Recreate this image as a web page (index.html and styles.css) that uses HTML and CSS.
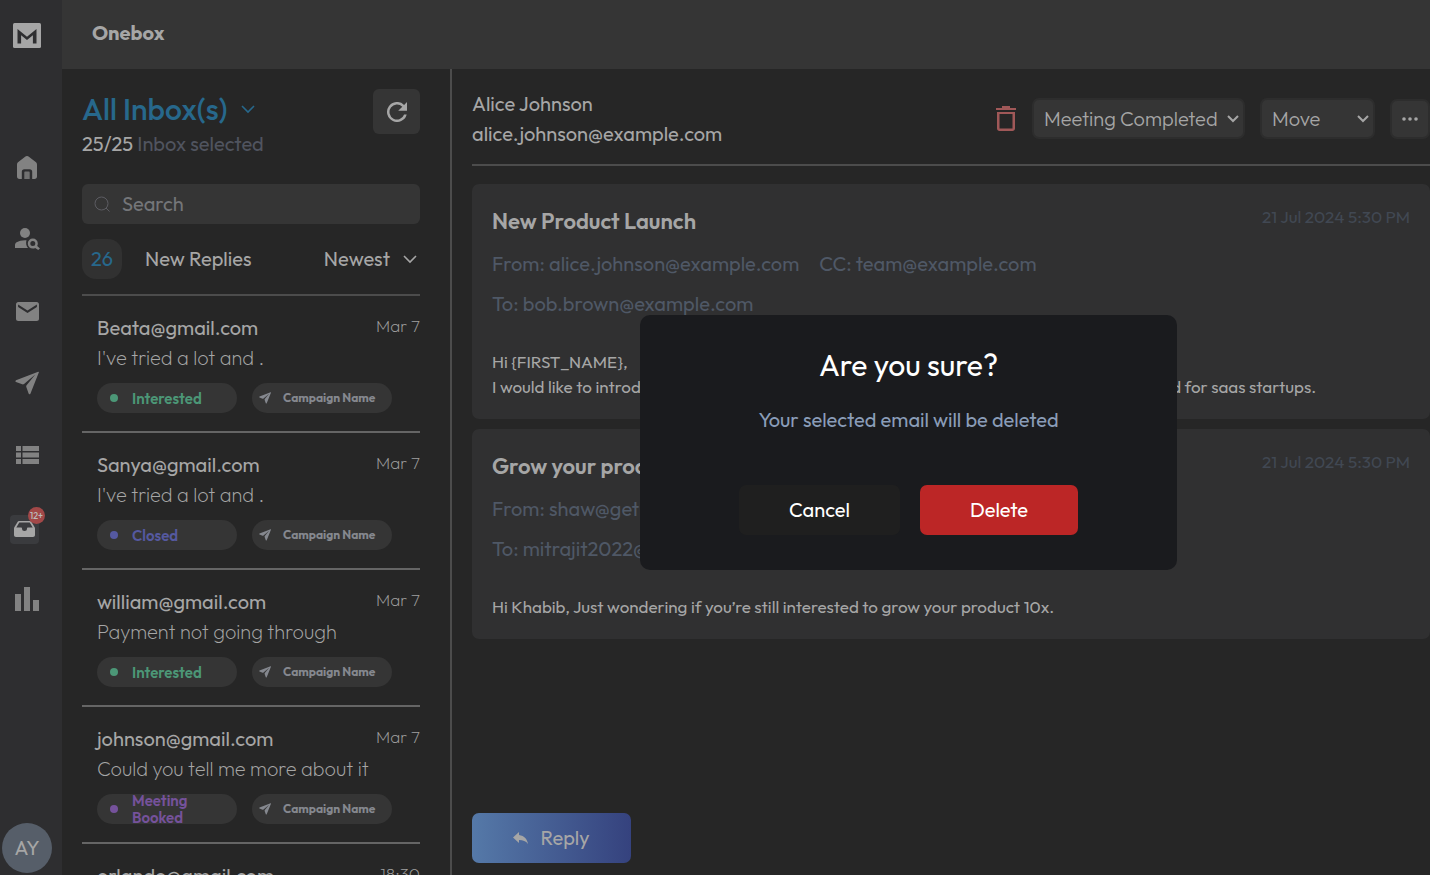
FILE: index.html
```html
<!DOCTYPE html>
<html lang="en">
<head>
<meta charset="utf-8">
<meta name="viewport" content="width=device-width, initial-scale=1">
<title>Onebox</title>
<link rel="stylesheet" href="styles.css">
</head>
<body>
<svg class="sprite" aria-hidden="true">
  <symbol id="plane" viewBox="0 0 24 24"><path d="M23.2.7 1 9.200c-.7.300-.8 1.500 0 1.800l6.200 2.300c.7.300 1.300.1 1.800-.3L20.300 3.600 11.600 14.200c-.4.500-.5 1.100-.3 1.700l2.300 6.700c.3.800 1.500.8 1.800.1L23.900 1.300c.2-.4-.2-.8-.7-.6Z"/></symbol>
  <symbol id="chevron" viewBox="0 0 16 10"><path d="m2 2 6 6 6-6" fill="none" stroke="currentColor" stroke-width="1.600"/></symbol>
</svg>
<div class="app">
  <aside class="sidebar">
    <svg class="logo" viewBox="0 0 28 25"><rect width="28" height="25" rx="1.500" fill="currentColor"/><path d="M4.500 6v14.500h3.600V12.300l5.900 4.700 5.900-4.700v8.200h3.600V6L14 13.800Z" fill="#2e2e30"/></svg>
    <nav class="nav" aria-label="Main">
      <a class="nav-link" href="#" aria-label="Home"><svg width="20" height="23" viewBox="0 0 20 23"><path d="M10 0c.8 0 1.500.3 2.200.9l6.500 5.200c.9.700 1.300 1.500 1.300 2.600v11.800c0 1.500-.9 2.500-2.500 2.500h-2.300v-7.200c0-1.600-.9-2.600-2.500-2.600H7.300c-1.600 0-2.500 1-2.500 2.600V23H2.500C.9 23 0 22 0 20.500V8.700c0-1.100.4-1.900 1.300-2.600L7.800.9C8.500.3 9.200 0 10 0Z"/><path d="M7.300 23v-6.300c0-.8.300-1.100 1-1.100h3.400c.7 0 1 .3 1 1.100V23Z" opacity=".8"/></svg></a>
      <a class="nav-link" href="#" aria-label="Find people"><svg width="25" height="22" viewBox="0 0 25 22"><circle cx="10" cy="5" r="5"/><path d="M11.500 12.300c-.5 0-1-.1-1.500-.1-3.400 0-6.200.9-8.400 2.100C.6 14.900 0 16 0 17.200V20h13a8 8 0 0 1-1.500-7.700Z"/><path fill-rule="evenodd" d="M22.200 18c.4-.7.600-1.500.6-2.400a5 5 0 1 0-5 5c.9 0 1.700-.3 2.400-.7L23.200 22l1.800-1.400ZM17.800 18.100a2.500 2.500 0 1 1 0-5 2.500 2.500 0 0 1 0 5Z"/></svg></a>
      <a class="nav-link" href="#" aria-label="Mail"><svg width="23" height="19" viewBox="0 0 23 19"><path fill-rule="evenodd" d="M2.300 0h18.400C22 0 23 1 23 2.300v14.400c0 1.300-1 2.300-2.300 2.300H2.300C1 19 0 18 0 16.700V2.300C0 1 1 0 2.300 0Zm9.200 11L20.900 5V2.600l-9.400 6-9.400-6V5Z"/></svg></a>
      <a class="nav-link" href="#" aria-label="Campaigns"><svg width="24" height="24"><use href="#plane"/></svg></a>
      <a class="nav-link" href="#" aria-label="Lists"><svg width="23" height="18" viewBox="0 0 23 18"><path d="M0 0h5v5H0ZM6.500 0H23v5H6.500ZM0 6.500h5v5H0Zm6.500 0H23v5H6.500ZM0 13h5v5H0Zm6.500 0H23v5H6.500Z"/></svg></a>
      <a class="nav-link nav-link-current" href="#" aria-label="Onebox, 12+ new" aria-current="page"><span class="nav-active"><svg width="21" height="16" viewBox="0 0 21 16"><path fill-rule="evenodd" d="M5 0h11c.6 0 1 .2 1.300.7L20.500 6c.3.500.5 1 .5 1.500V14c0 1.200-.8 2-2 2H2c-1.200 0-2-.8-2-2V7.500C0 7 .2 6.500.5 6L3.700.7C4 .2 4.400 0 5 0Zm.3 1.500L2.300 6.600h4.900c.5 0 .8.300.8.800a2.500 2.500 0 0 0 5 0c0-.5.300-.8.800-.8h4.900l-3-5.100Z"/></svg><span class="nav-badge">12+</span></span></a>
      <a class="nav-link" href="#" aria-label="Analytics"><svg width="24" height="24" viewBox="0 0 24 24"><path d="M0 7h6v17H0ZM9 0h6v24H9Zm9 13h6v11h-6Z"/></svg></a>
    </nav>
    <button class="avatar" type="button">AY</button>
  </aside>
  <div class="workspace">
    <header class="topbar"><h1 class="topbar-title">Onebox</h1></header>
    <div class="columns">
      <section class="inbox">
        <div class="inbox-head">
          <div>
            <button class="inbox-picker" type="button">All Inbox(s) <svg width="16" height="10"><use href="#chevron"/></svg></button>
            <p class="inbox-count"><span class="strong">25/25</span> Inbox selected</p>
          </div>
          <button class="refresh" type="button" aria-label="Refresh"><svg width="20" height="20" viewBox="0 0 20 20"><path d="M17.100 2.900A10 10 0 1 0 19.700 12.500H17.100A7.500 7.500 0 1 1 15.300 4.700L11.200 8.800H20V0Z"/></svg></button>
        </div>
        <label class="search">
          <svg width="16" height="16" viewBox="0 0 16 16"><g fill="none" stroke="currentColor"><circle cx="7.500" cy="7.500" r="6.500"/><path d="m12 12 3.500 3.500"/></g></svg>
          <input class="search-input" type="search" placeholder="Search" aria-label="Search">
        </label>
        <div class="filters">
          <span class="count">26</span>
          <span class="filters-label">New Replies</span>
          <button class="sort" type="button">Newest <svg width="16" height="10"><use href="#chevron"/></svg></button>
        </div>
        <ul class="threads">
          <li class="thread">
            <div class="thread-top"><span class="thread-from">Beata@gmail.com</span><time class="thread-date">Mar 7</time></div>
            <p class="thread-text">I've tried a lot and .</p>
            <div class="tags"><span class="tag green">Interested</span><span class="campaign"><svg width="12" height="12"><use href="#plane"/></svg>Campaign Name</span></div>
          </li>
          <li class="thread">
            <div class="thread-top"><span class="thread-from">Sanya@gmail.com</span><time class="thread-date">Mar 7</time></div>
            <p class="thread-text">I've tried a lot and .</p>
            <div class="tags"><span class="tag blue">Closed</span><span class="campaign"><svg width="12" height="12"><use href="#plane"/></svg>Campaign Name</span></div>
          </li>
          <li class="thread">
            <div class="thread-top"><span class="thread-from">william@gmail.com</span><time class="thread-date">Mar 7</time></div>
            <p class="thread-text">Payment not going through</p>
            <div class="tags"><span class="tag green">Interested</span><span class="campaign"><svg width="12" height="12"><use href="#plane"/></svg>Campaign Name</span></div>
          </li>
          <li class="thread">
            <div class="thread-top"><span class="thread-from">johnson@gmail.com</span><time class="thread-date">Mar 7</time></div>
            <p class="thread-text">Could you tell me more about it</p>
            <div class="tags"><span class="tag purple">Meeting<br>Booked</span><span class="campaign"><svg width="12" height="12"><use href="#plane"/></svg>Campaign Name</span></div>
          </li>
          <li class="thread">
            <div class="thread-top"><span class="thread-from">orlando@gmail.com</span><time class="thread-date">18:30</time></div>
          </li>
        </ul>
      </section>
      <main class="reader">
        <div class="reader-head">
          <div class="contact"><p>Alice Johnson</p><p>alice.johnson@example.com</p></div>
          <div class="actions">
            <button class="trash" type="button" aria-label="Delete email"><svg width="20" height="25" viewBox="0 0 20 25"><path fill-rule="evenodd" d="M6 0h8v2h6v2H0V2h6ZM1 6h18v16.500c0 1.400-1.100 2.500-2.500 2.500h-13C2.100 25 1 23.900 1 22.500Zm2.500 2v14.500h13V8Z"/></svg></button>
            <span class="picker"><select class="select status" aria-label="Status"><option>Meeting Completed</option></select><svg width="12" height="8" viewBox="0 0 12 8"><path d="m1 1 5 5 5-5" fill="none" stroke="currentColor" stroke-width="2"/></svg></span>
            <span class="picker"><select class="select move" aria-label="Move"><option>Move</option></select><svg width="12" height="8" viewBox="0 0 12 8"><path d="m1 1 5 5 5-5" fill="none" stroke="currentColor" stroke-width="2"/></svg></span>
            <button class="more" type="button" aria-label="More"><svg width="16" height="4" viewBox="0 0 16 4"><circle cx="2" cy="2" r="1.800"/><circle cx="8" cy="2" r="1.800"/><circle cx="14" cy="2" r="1.800"/></svg></button>
          </div>
        </div>
        <article class="mail">
          <div class="mail-top"><h2 class="mail-title">New Product Launch</h2><time class="mail-date">21 Jul 2024 5:30 PM</time></div>
          <p class="mail-meta"><span>From: alice.johnson@example.com</span><span>CC: team@example.com</span></p>
          <p class="mail-meta">To: bob.brown@example.com</p>
          <p class="mail-body">Hi {FIRST_NAME},<br>I would like to introduce you to SaaS Grow, a productized design service specifically designed for saas startups.</p>
        </article>
        <article class="mail">
          <div class="mail-top"><h2 class="mail-title">Grow your product 10x</h2><time class="mail-date">21 Jul 2024 5:30 PM</time></div>
          <p class="mail-meta">From: shaw@getmemeetings.com</p>
          <p class="mail-meta">To: mitrajit2022@gmail.com</p>
          <p class="mail-body">Hi Khabib, Just wondering if you’re still interested to grow your product 10x.</p>
        </article>
        <button class="reply" type="button"><svg width="15" height="12" viewBox="0 0 15 12"><path d="M6 3V0L0 5.500 6 11V8c4 0 6.800 1 9 4-.8-4.500-3.500-8.300-9-9Z"/></svg>Reply</button>
      </main>
    </div>
  </div>
</div>
<div class="overlay">
  <div class="dialog" role="alertdialog" aria-modal="true" aria-labelledby="dialog-title" aria-describedby="dialog-text">
    <h2 class="dialog-title" id="dialog-title">Are you sure?</h2>
    <p class="dialog-text" id="dialog-text">Your selected email will be deleted</p>
    <div class="dialog-actions"><button class="cancel" type="button">Cancel</button><button class="delete" type="button">Delete</button></div>
  </div>
</div>
</body>
</html>
```
FILE: styles.css
```css
:root {
  --text: #a6a6a6;
  --muted: #4f5866;
  --bg: #262626;
  --raised: #353535;
  --line: #4c4c4c;
}
* { box-sizing: border-box; }
body, h1, h2, p, ul { margin: 0; padding: 0; }
body {
  background: var(--bg);
  color: var(--text);
  font: 20px/30px Outfit, Lato, "Open Sans", sans-serif;
}
button, input, select { font: inherit; color: inherit; border: 0; padding: 0; background: none; }
svg { fill: currentColor; flex: none; }
ul { list-style: none; }
.sprite { position: absolute; width: 0; height: 0; }

.app { display: flex; height: 100vh; overflow: hidden; }
.sidebar {
  flex: none;
  width: 62px;
  padding: 23px 8px 2px 0;
  display: flex;
  flex-direction: column;
  align-items: center;
  background: #2e2e30;
}
.logo { width: 28px; height: 25px; }
.nav { margin-top: 83px; }
.nav-link { display: grid; place-items: center; width: 54px; height: 72px; color: #828282; }
.nav-link-current { padding-top: 4px; }
.nav-active {
  position: relative;
  display: grid;
  place-items: center;
  width: 29px;
  height: 29px;
  margin-right: 5px;
  border-radius: 4px;
  background: #3a3b3e;
  color: var(--text);
}
.nav-badge {
  position: absolute;
  top: -8px;
  right: -6px;
  width: 17px;
  height: 17px;
  border-radius: 50%;
  background: #a24848;
  color: #bbb;
  font-size: 9px;
  font-weight: 500;
  line-height: 17px;
  text-align: center;
}
.avatar {
  width: 50px;
  height: 50px;
  margin-top: auto;
  border-radius: 50%;
  background: #565e69;
}

.workspace { flex: 1; min-width: 0; display: flex; flex-direction: column; }
.topbar { flex: none; padding: 18px 30px 21px; background: var(--raised); }
.topbar-title { font-size: 20px; line-height: 30px; font-weight: 700; }
.columns { flex: 1; min-height: 0; display: flex; }

.inbox { flex: none; width: 390px; padding: 20px 30px 0 20px; border-right: 2px solid var(--line); overflow: hidden; }
.inbox-head { display: flex; justify-content: space-between; align-items: flex-start; height: 95px; }
.inbox-picker { display: flex; align-items: center; gap: 12px; font-size: 30px; line-height: 40px; font-weight: 500; color: #27688c; }
.inbox-count { color: #50545f; }
.strong { color: var(--text); }
.refresh { display: grid; place-items: center; width: 47px; height: 45px; border-radius: 6px; background: var(--raised); }
.search { display: flex; align-items: center; gap: 12px; height: 40px; padding: 0 12px; border-radius: 6px; background: var(--raised); color: #5c5c62; }
.search-input { flex: 1; min-width: 0; outline: 0; }
.search-input::placeholder { color: #747679; opacity: 1; }
.filters { display: flex; align-items: center; margin-top: 15px; padding-bottom: 15px; border-bottom: 2px solid var(--line); }
.count { width: 40px; height: 40px; border-radius: 14px; background: #313131; color: #27688c; line-height: 40px; text-align: center; }
.filters-label { margin-left: 23px; }
.sort { display: flex; align-items: center; gap: 12px; margin-left: auto; padding-right: 2px; }

.thread { padding: 17px 0 18px 15px; border-bottom: 2px solid #656565; }
.thread-top { display: flex; justify-content: space-between; }
.thread-date { font-size: 17px; line-height: 26px; font-weight: 200; color: #a0a0a0; }
.thread-text { font-weight: 200; }
.tags { display: flex; gap: 15px; margin-top: 10px; }
.tag, .campaign {
  display: flex;
  align-items: center;
  width: 140px;
  height: 30px;
  border-radius: 15px;
  background: var(--raised);
  font-weight: 600;
}
.tag { gap: 14px; padding-left: 13px; font-size: 15px; line-height: 17px; }
.tag::before { content: ""; width: 8px; height: 8px; border-radius: 50%; background: currentColor; }
.green { color: #4c9777; }
.blue { color: #5559a0; }
.purple { color: #75529b; }
.campaign { gap: 12px; padding-left: 7px; font-size: 12px; font-weight: 700; color: #85888f; }

.reader { flex: 1; min-width: 0; display: flex; flex-direction: column; padding: 20px 0 12px 20px; }
.reader-head { display: flex; justify-content: space-between; padding-bottom: 15px; margin-bottom: 18px; border-bottom: 2px solid var(--line); }
.actions { display: flex; align-items: center; gap: 15px; height: 59px; }
.trash { display: grid; padding-right: 1px; color: #a05858; }
.picker { display: grid; align-items: center; justify-items: end; }
.picker > * { grid-area: 1 / 1; }
.picker svg { margin-right: 6px; pointer-events: none; }
.select { appearance: none; height: 41px; padding: 0 10px; border: 2px solid #2d2d2d; border-radius: 7px; background: var(--raised); font-weight: 300; }
.status { width: 213px; }
.move { width: 115px; }
.more { display: grid; place-items: center; width: 40px; height: 40px; border: 2px solid #2d2d2d; border-radius: 7px; background: var(--raised); }
.mail { padding: 20px; margin-bottom: 10px; border-radius: 7px; background: #303031; }
.mail-top { display: flex; justify-content: space-between; margin-bottom: 10px; }
.mail-title { font-size: 22px; line-height: 35px; font-weight: 600; }
.mail-date { font-size: 17px; line-height: 26px; font-weight: 400; color: #414853; }
.mail-meta { display: flex; gap: 20px; margin-bottom: 10px; color: var(--muted); }
.mail-body { margin-top: 30px; font-size: 17px; line-height: 25px; }
.reply {
  display: flex;
  align-items: center;
  justify-content: center;
  gap: 12px;
  width: 159px;
  height: 50px;
  margin-top: auto;
  border-radius: 7px;
  background: linear-gradient(90deg, #5579a8, #35427e);
}

.overlay { position: fixed; inset: 0; display: grid; place-items: center; padding: 10px 0 0 387px; }
.dialog { padding: 32px 99px 35px; border-radius: 10px; background: #1a1b1e; text-align: center; }
.dialog-title { margin-bottom: 22px; font-size: 30px; line-height: 36px; font-weight: 400; color: #fff; }
.dialog-text { margin-bottom: 50px; color: #8a9db8; }
.dialog-actions { display: flex; gap: 20px; color: #fff; }
.cancel, .delete { height: 50px; border-radius: 7px; }
.cancel { width: 161px; background: #1f1f1f; }
.delete { width: 158px; background: #bc2626; }
```
